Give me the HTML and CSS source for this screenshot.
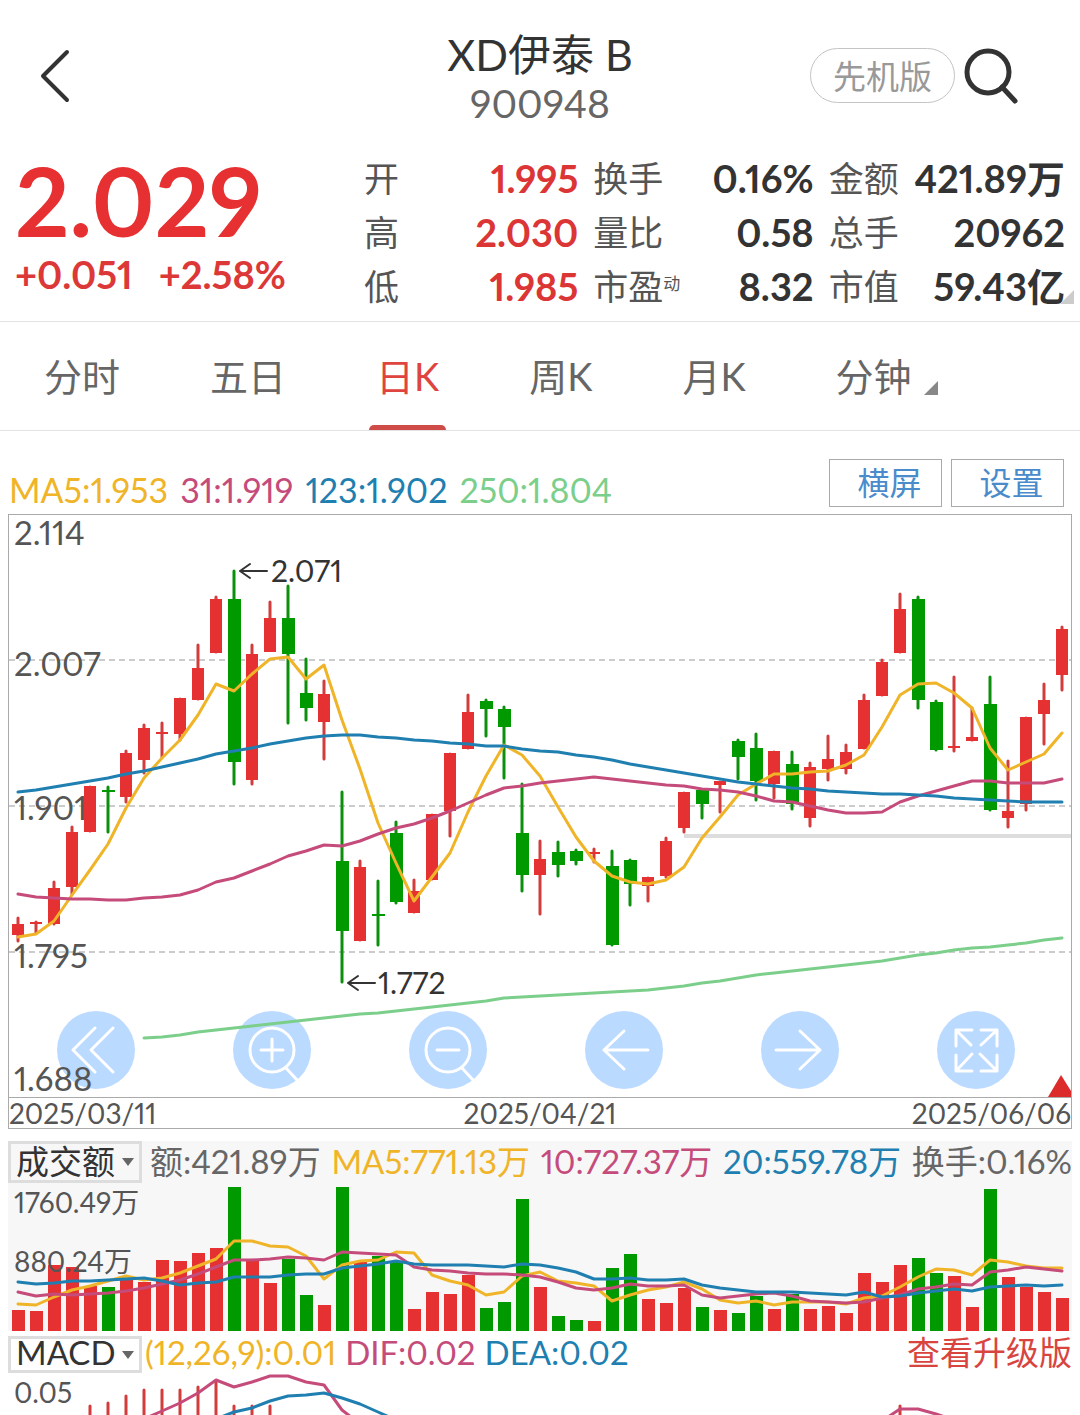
FILE: index.html
```html
<!DOCTYPE html>
<html lang="zh-CN">

<head>
  <meta charset="UTF-8">
  <meta name="viewport" content="width=device-width, initial-scale=1.0">
  <title>XD伊泰B 900948</title>
  <link rel="stylesheet" href="styles.css">
</head>

<body>
  <header class="header">
    <button class="back" aria-label="返回">
      <svg width="34" height="56" viewBox="0 0 34 56"><path d="M29 4 L5 28 L29 52" /></svg>
    </button>
    <div class="name">
      <h1>XD伊泰 B</h1>
      <p>900948</p>
    </div>
    <div class="header-right">
      <button class="pill">先机版</button>
      <button class="search" aria-label="搜索">
        <svg width="54" height="56" viewBox="0 0 54 56"><circle cx="24" cy="24" r="21" /><path d="M38 39 L51 53" /></svg>
      </button>
    </div>
  </header>

  <section class="quote">
    <div class="price">
      <div class="now">2.029</div>
      <div class="change"><span>+0.051</span><span>+2.58%</span></div>
    </div>
    <dl class="info">
      <div class="info-item"><dt>开</dt><dd class="up">1.995</dd></div>
      <div class="info-item"><dt>换手</dt><dd>0.16%</dd></div>
      <div class="info-item"><dt>金额</dt><dd>421.89万</dd></div>
      <div class="info-item"><dt>高</dt><dd class="up">2.030</dd></div>
      <div class="info-item"><dt>量比</dt><dd>0.58</dd></div>
      <div class="info-item"><dt>总手</dt><dd>20962</dd></div>
      <div class="info-item"><dt>低</dt><dd class="up">1.985</dd></div>
      <div class="info-item"><dt>市盈<small>动</small></dt><dd>8.32</dd></div>
      <div class="info-item"><dt>市值</dt><dd>59.43亿</dd></div>
    </dl>
    <span class="more"></span>
  </section>

  <nav class="tabs">
    <button>分时</button>
    <button>五日</button>
    <button class="active">日K</button>
    <button>周K</button>
    <button>月K</button>
    <button class="drop">分钟</button>
  </nav>

  <div class="toolbar">
    <div class="legend">
      <span class="yellow">MA5:1.953</span>
      <span class="pink">31:1.919</span>
      <span class="blue">123:1.902</span>
      <span class="lime">250:1.804</span>
    </div>
    <div class="options">
      <button>横屏</button>
      <button>设置</button>
    </div>
  </div>

  <section class="kline">
    <div class="kline-chart">
      <div class="controls">
        <button aria-label="更早">
          <svg viewBox="0 0 78 78"><path d="M38 17 L16 39 L38 61 M56 17 L34 39 L56 61" /></svg>
        </button>
        <button aria-label="放大">
          <svg viewBox="0 0 78 78"><circle cx="39" cy="39" r="22" /><path d="M28 39 H50 M39 28 V50 M53 57 L64 69" /></svg>
        </button>
        <button aria-label="缩小">
          <svg viewBox="0 0 78 78"><circle cx="39" cy="39" r="22" /><path d="M28 39 H50 M53 57 L64 69" /></svg>
        </button>
        <button aria-label="左移">
          <svg viewBox="0 0 78 78"><path d="M63 39 H19 M39 20 L19 39 L39 58" /></svg>
        </button>
        <button aria-label="右移">
          <svg viewBox="0 0 78 78"><path d="M15 39 H59 M39 20 L59 39 L39 58" /></svg>
        </button>
        <button aria-label="全屏">
          <svg viewBox="0 0 78 78"><path d="M35 19 H19 V35 M19 19 L34 34 M44 19 H60 V35 M60 19 L44 34 M35 60 H19 V44 M19 60 L35 43 M44 60 H60 V44 M60 60 L43 43" /></svg>
        </button>
      </div>
      <svg id="kline" class="chart" viewBox="9 515 1062 582"></svg>
    </div>
    <div class="dates"><span>2025/03/11</span><span>2025/04/21</span><span>2025/06/06</span></div>
  </section>

  <section class="volume">
    <div class="panel-head">
      <div class="picker">
        <select aria-label="成交指标"><option>成交额</option><option>成交量</option></select>
      </div>
      <div class="panel-legend">
        <span>额:421.89万</span>
        <span class="yellow">MA5:771.13万</span>
        <span class="pink">10:727.37万</span>
        <span class="blue">20:559.78万</span>
        <span>换手:0.16%</span>
      </div>
    </div>
    <svg id="volume" class="chart" viewBox="8 1183 1064 148"></svg>
  </section>

  <section class="macd">
    <div class="panel-head">
      <div class="picker">
        <select aria-label="技术指标"><option>MACD</option><option>KDJ</option></select>
      </div>
      <div class="macd-legend">
        <span class="yellow">(12,26,9):0.01</span>
        <span class="pink">DIF:0.02</span>
        <span class="blue">DEA:0.02</span>
      </div>
      <a class="upgrade" href="#">查看升级版</a>
    </div>
    <svg id="macd" class="chart" viewBox="8 1373 1064 42"></svg>
  </section>

  <script src="chart.js"></script>
</body>

</html>
```
FILE: styles.css
```css
* {
  box-sizing: border-box;
}

body {
  margin: 0;
  overflow-x: hidden;
  color: #555;
  background: #fff;
  font-family: Lato, "Noto Sans CJK SC", sans-serif;
  font-variant-numeric: proportional-nums;
}

button,
select {
  margin: 0;
  padding: 0;
  border: 0;
  color: inherit;
  background: none;
  font: inherit;
  font-variant-numeric: inherit;
}

h1,
p,
dl,
dd {
  margin: 0;
}

svg {
  display: block;
  fill: none;
  stroke-linecap: round;
  stroke-linejoin: round;
}

.yellow { color: #f0b428; }
.pink { color: #c54b7b; }
.blue { color: #1f7fb0; }
.lime { color: #7bcf8b; }

/* 顶部 */
.header {
  display: grid;
  grid-template-columns: 1fr auto 1fr;
  padding: 30px 62px 0;
}

.back,
.header-right {
  height: 91px;
}

.back {
  justify-self: start;
  margin-left: -24px;
}

.back svg,
.search svg {
  stroke: #333;
  stroke-width: 4;
}

.search svg {
  stroke-width: 5;
}

.name {
  text-align: center;
}

.name h1 {
  color: #333;
  font-size: 43px;
  font-weight: 400;
  line-height: 50px;
}

.name p {
  color: #666;
  font-size: 39px;
  line-height: 46px;
}

.header-right {
  display: flex;
  align-items: center;
  justify-content: flex-end;
  gap: 9px;
}

.pill {
  width: 145px;
  height: 55px;
  border: 1px solid #c4c4c4;
  border-radius: 28px;
  color: #999;
  font-size: 33px;
  line-height: 50px;
}

/* 报价 */
.quote {
  position: relative;
  display: flex;
  padding: 25px 15px 8px;
  border-bottom: 1px solid #e2e2e2;
}

.price {
  width: 349px;
  color: #e73031;
  font-weight: 700;
}

.now {
  font-size: 95px;
  line-height: 98px;
}

.change {
  display: flex;
  gap: 26px;
  color: #dc3838;
  font-size: 38px;
  line-height: 50px;
}

.info {
  flex: 1;
  display: grid;
  grid-template-columns: 214fr 220fr 236fr;
  column-gap: 15px;
}

.info-item {
  display: flex;
  justify-content: space-between;
  font-size: 35px;
  line-height: 54px;
  white-space: nowrap;
}

.info-item dd {
  color: #333;
  font-size: 38px;
  font-weight: 700;
}

.info-item dd.up {
  color: #dc3535;
}

.info-item small {
  font-size: 17px;
  vertical-align: 10px;
  line-height: 17px;
}

.more {
  position: absolute;
  right: 6px;
  bottom: 17px;
  border-bottom: 14px solid #ccc;
  border-left: 14px solid transparent;
}

/* 周期切换 */
.tabs {
  display: flex;
  gap: 90px;
  height: 109px;
  padding-left: 44px;
  border-bottom: 1px solid #e2e2e2;
}

.tabs button {
  position: relative;
  padding-bottom: 4px;
  color: #666;
  font-size: 38px;
}

.tabs .active {
  color: #e0443f;
}

.tabs .active::after {
  content: "";
  position: absolute;
  right: -7px;
  bottom: 0;
  left: -7px;
  height: 5px;
  border-radius: 5px 5px 0 0;
  background: #cf4b48;
}

.tabs .drop::after {
  content: "";
  position: absolute;
  right: -26px;
  bottom: 35px;
  border-bottom: 14px solid #888;
  border-left: 14px solid transparent;
}

/* 均线 */
.toolbar {
  display: flex;
  justify-content: space-between;
  padding: 28px 16px 7px 9px;
}

.legend {
  display: flex;
  align-self: flex-end;
  gap: 12px;
  font-size: 34px;
  line-height: 34px;
}

.options {
  display: flex;
  gap: 9px;
}

.options button {
  width: 113px;
  height: 48px;
  padding-left: 8px;
  border: 1px solid #aaa;
  color: #4a8ccb;
  font-size: 32px;
  line-height: 44px;
}

/* K线 */
.kline {
  margin: 0 8px 12px;
  border: 1px solid #aaa;
}

.kline-chart {
  position: relative;
}

.chart {
  width: 100%;
  font-size: 33px;
}

#kline {
  position: relative;
  overflow: visible;
  pointer-events: none;
}

.controls {
  position: absolute;
  right: 56px;
  bottom: 8px;
  left: 48px;
  display: flex;
  justify-content: space-between;
}

.controls button {
  width: 78px;
  height: 78px;
  border-radius: 50%;
  background: #bbdaff;
}

.controls svg {
  stroke: #fff;
  stroke-width: 3;
}

.dates {
  display: grid;
  grid-template-columns: 1fr auto 1fr;
  height: 31px;
  border-top: 1px solid #aaa;
  font-size: 28px;
  line-height: 30px;
}

.dates span:last-child {
  text-align: right;
}

/* 成交额、MACD */
.volume,
.macd {
  margin: 0 8px;
}

.volume {
  background: #f7f7f7;
}

.macd {
  margin-top: 5px;
}

.panel-head {
  display: flex;
  align-items: flex-start;
  height: 42px;
  color: #666;
  font-size: 33px;
  line-height: 40px;
  white-space: nowrap;
}

.macd .panel-head {
  height: 37px;
  line-height: 32px;
}

.picker {
  position: relative;
  width: 134px;
  height: 100%;
  border: 3px solid #ddd;
}

.picker select {
  display: block;
  width: 100%;
  height: 34px;
  padding-left: 5px;
  appearance: none;
  overflow: visible;
  color: #333;
  font-size: 33px;
  line-height: 34px;
}

.macd .picker select {
  height: 26px;
  line-height: 26px;
}

.picker::after {
  content: "";
  position: absolute;
  top: 14px;
  right: 5px;
  border-top: 8px solid #666;
  border-right: 6px solid transparent;
  border-left: 6px solid transparent;
  pointer-events: none;
}

.macd .picker::after {
  top: 12px;
}

.panel-legend {
  flex: 1;
  display: flex;
  justify-content: space-between;
  padding-left: 8px;
}

.macd-legend {
  flex: 1;
  display: flex;
  gap: 9px;
  padding-left: 3px;
}

.upgrade {
  color: #d8453f;
  font-size: 33px;
  text-decoration: none;
}

/* 图形 */
.grid { stroke: #ccc; stroke-width: 2; stroke-dasharray: 6 4; stroke-linecap: butt; }
.axis { fill: #555; }
.axis-small { fill: #555; font-size: 28px; }
.mark { fill: #333; font-size: 30px; }
.mark-line { stroke: #333; stroke-width: 2; }
.support { stroke: #ddd; stroke-width: 4; stroke-linecap: butt; }
.flag { fill: #dc2b2b; }
.bar-up { fill: #e53131; }
.bar-down { fill: #090; }
.wick-up { stroke: #d23c3c; stroke-width: 3; }
.wick-down { stroke: #0c8f0c; stroke-width: 3; }
.line-yellow { stroke: #f0b428; stroke-width: 3; }
.line-pink { stroke: #c54b7b; stroke-width: 3; }
.line-blue { stroke: #1f7fb0; stroke-width: 3; }
.line-lime { stroke: #7bcf8b; stroke-width: 3; }
```
FILE: chart.js
```js
// 每根K线： [涨跌, 实体上沿, 实体下沿, 最高, 最低]
const candles = [
  [1, 924, 935, 918, 941], [1, 922, 924, 922, 933], [1, 888, 924, 882, 924], [1, 832, 887, 827, 894],
  [1, 786, 832, 787, 831], [0, 790, 792, 787, 832], [1, 753, 797, 751, 802], [1, 728, 760, 725, 773],
  [1, 732, 734, 723, 757], [1, 698, 734, 699, 740], [1, 668, 700, 645, 699], [1, 599, 653, 597, 652],
  [0, 599, 762, 571, 784], [1, 654, 780, 645, 784], [1, 618, 652, 602, 650], [0, 618, 654, 586, 723],
  [0, 693, 708, 659, 720], [1, 694, 722, 681, 759], [0, 861, 931, 792, 982], [1, 867, 941, 861, 940],
  [0, 914, 916, 881, 945], [0, 833, 902, 822, 903], [1, 891, 913, 880, 912], [1, 814, 880, 815, 879],
  [1, 753, 811, 754, 836], [1, 712, 749, 695, 748], [0, 701, 709, 700, 736], [0, 709, 727, 707, 778],
  [0, 833, 875, 784, 891], [1, 859, 875, 841, 914], [0, 852, 865, 842, 876], [0, 851, 861, 850, 864],
  [1, 852, 854, 849, 862], [0, 866, 945, 851, 945], [0, 860, 884, 860, 905], [1, 877, 886, 878, 901],
  [1, 841, 876, 838, 877], [1, 792, 828, 793, 832], [0, 790, 804, 790, 818], [1, 781, 785, 782, 812],
  [0, 741, 757, 740, 779], [0, 748, 781, 734, 800], [1, 751, 784, 752, 798], [0, 764, 804, 752, 809],
  [1, 767, 818, 763, 826], [1, 759, 769, 736, 780], [1, 752, 769, 745, 773], [1, 700, 749, 695, 748],
  [1, 662, 696, 660, 695], [1, 609, 653, 594, 652], [0, 599, 700, 597, 708], [0, 702, 750, 701, 750],
  [1, 746, 748, 677, 751], [1, 737, 741, 708, 740], [0, 704, 810, 677, 810], [1, 811, 818, 761, 827],
  [1, 717, 804, 718, 810], [1, 700, 714, 684, 744], [1, 629, 675, 627, 690]
]

const ma5 = [937, 934, 921, 895, 870, 844, 808, 778, 758, 740, 715, 684, 691, 674, 659, 657, 679, 665, 720, 769,
  823, 863, 901, 877, 853, 812, 776, 745, 755, 776, 807, 837, 861, 876, 882, 884, 880, 867, 838, 817,
  795, 784, 774, 774, 772, 771, 765, 755, 727, 695, 684, 683, 693, 708, 748, 770, 762, 754, 733]
const ma31 = [894, 897, 898, 899, 899, 900, 900, 898, 897, 895, 890, 882, 878, 871, 864, 856, 851, 845, 846, 841,
  834, 828, 824, 818, 811, 803, 795, 788, 786, 783, 781, 779, 777, 779, 781, 783, 785, 786, 789, 790,
  792, 796, 801, 802, 806, 810, 813, 813, 812, 802, 796, 791, 786, 781, 781, 783, 783, 783, 779]
const ma123 = [792, 790, 787, 784, 781, 778, 774, 771, 767, 763, 759, 754, 751, 748, 744, 741, 738, 736, 735, 735,
  737, 738, 740, 741, 743, 744, 746, 746, 749, 751, 752, 755, 757, 760, 764, 767, 770, 773, 776, 779,
  782, 784, 786, 788, 789, 791, 792, 793, 794, 794, 795, 796, 798, 799, 800, 801, 802, 802, 802]
// 250日均线从第8根开始
const ma250 = [1038, 1037, 1035, 1032, 1030, 1028, 1026, 1024, 1022, 1020, 1018, 1016, 1014, 1013, 1011, 1009, 1007,
  1005, 1003, 1001, 998, 997, 996, 995, 994, 993, 992, 991, 990, 988, 986, 983, 981, 978, 975, 973, 971, 969, 967,
  965, 963, 961, 958, 955, 953, 950, 948, 947, 945, 943, 940, 938]

// 成交额柱顶
const amount = [1310, 1311, 1265, 1267, 1286, 1287, 1278, 1282, 1260, 1261, 1253, 1248, 1187, 1261, 1283, 1259, 1295, 1305, 1187, 1262,
  1256, 1262, 1309, 1292, 1294, 1275, 1308, 1302, 1199, 1287, 1316, 1320, 1321, 1268, 1254, 1299, 1303, 1288, 1307, 1310,
  1313, 1296, 1309, 1294, 1309, 1306, 1313, 1273, 1282, 1265, 1258, 1273, 1276, 1307, 1189, 1277, 1287, 1292, 1298]
const vol5 = [1304, 1305, 1297, 1290, 1286, 1281, 1276, 1280, 1278, 1273, 1266, 1259, 1241, 1241, 1246, 1247, 1256, 1279, 1265, 1261,
  1260, 1252, 1253, 1275, 1281, 1285, 1295, 1292, 1276, 1272, 1281, 1283, 1286, 1301, 1295, 1290, 1287, 1282, 1289, 1300,
  1303, 1301, 1305, 1302, 1302, 1302, 1304, 1298, 1296, 1287, 1277, 1269, 1270, 1275, 1260, 1262, 1266, 1268, 1268]
const vol10 = [1292, 1296, 1294, 1295, 1294, 1293, 1291, 1288, 1284, 1280, 1274, 1267, 1260, 1260, 1259, 1257, 1258, 1260, 1252, 1253,
  1254, 1255, 1267, 1270, 1271, 1273, 1274, 1274, 1275, 1277, 1282, 1288, 1290, 1288, 1284, 1286, 1286, 1285, 1295, 1298,
  1296, 1294, 1293, 1296, 1301, 1302, 1303, 1302, 1298, 1295, 1289, 1287, 1284, 1285, 1272, 1270, 1267, 1269, 1271]
const vol20 = [1282, 1284, 1283, 1281, 1281, 1280, 1279, 1278, 1281, 1285, 1283, 1282, 1277, 1277, 1277, 1275, 1274, 1274, 1268, 1266,
  1264, 1261, 1264, 1265, 1265, 1265, 1266, 1267, 1264, 1265, 1268, 1272, 1279, 1279, 1278, 1280, 1280, 1279, 1285, 1288,
  1290, 1292, 1292, 1292, 1293, 1294, 1295, 1292, 1297, 1296, 1293, 1291, 1289, 1291, 1287, 1286, 1285, 1286, 1285]

// MACD 红柱从第5根开始
const macdBars = [1406, 1403, 1396, 1390, 1390, 1390, 1387, 1381, 1406, 1406, 1406]
const dif = [1419, 1411, 1403, 1393, 1380, 1387, 1382, 1376, 1376, 1382, 1385, 1410, 1424]
const dea = [1419, 1412, 1408, 1401, 1396, 1395, 1393, 1398, 1404, 1412, 1420]

const px = i => 18 + i * 18

function line(data, cls, start = 0) {
  let points = data.map((y, i) => `${px(i + start)},${y}`).join(' ')
  return `<polyline class="line-${cls}" points="${points}" />`
}

function text(x, y, str, cls = 'axis') {
  return `<text class="${cls}" x="${x}" y="${y}">${str}</text>`
}

function drawKline() {
  let html = ''
  for (let y of [660, 806, 952]) {
    html += `<path class="grid" d="M9 ${y} H1071" />`
  }
  html += text(14, 545, '2.114') + text(14, 676, '2.007') + text(14, 820, '1.901') + text(14, 968, '1.795') + text(14, 1091, '1.688')
  html += '<path class="support" d="M684 836 H1071" />'

  candles.forEach(([up, top, bottom, high, low], i) => {
    let dir = up ? 'up' : 'down'
    html += `<path class="wick-${dir}" d="M${px(i)} ${high} V${low}" />`
    html += `<rect class="bar-${dir}" x="${px(i) - 6}" y="${top}" width="${up ? 12 : 13}" height="${bottom - top}" />`
  })

  html += line(ma5, 'yellow') + line(ma31, 'pink') + line(ma123, 'blue') + line(ma250, 'lime', 7)

  // 最高、最低价标注
  html += '<path class="mark-line" d="M267 571 H240 M250 564 L240 571 L250 578" />' + text(271, 582, '2.071', 'mark')
  html += '<path class="mark-line" d="M375 983 H348 M358 976 L348 983 L358 990" />' + text(378, 994, '1.772', 'mark')
  html += '<path class="flag" d="M1048 1097 L1061 1075 L1071 1091 V1097 Z" />'
  document.querySelector('#kline').innerHTML = html
}

function drawVolume() {
  let html = ''
  amount.forEach((top, i) => {
    let up = candles[i][0]
    html += `<rect class="bar-${up ? 'up' : 'down'}" x="${px(i) - 6}" y="${top}" width="13" height="${1331 - top}" />`
  })
  html += line(vol5, 'yellow') + line(vol10, 'pink') + line(vol20, 'blue')
  html += text(14, 1213, '1760.49万', 'axis-small') + text(14, 1272, '880.24万', 'axis-small')
  document.querySelector('#volume').innerHTML = html
}

function drawMacd() {
  let html = ''
  macdBars.forEach((top, i) => {
    html += `<path class="wick-up" d="M${px(i + 4)} ${top} V1420" />`
  })
  html += '<path class="wick-up" d="M900 1406 V1420" />'
  html += line(dif, 'pink', 7) + line(dea, 'blue', 11) + line([1421, 1409, 1409, 1414, 1420], 'pink', 48)
  html += text(14, 1403, '0.05', 'axis-small')
  document.querySelector('#macd').innerHTML = html
}

drawKline()
drawVolume()
drawMacd()
```
